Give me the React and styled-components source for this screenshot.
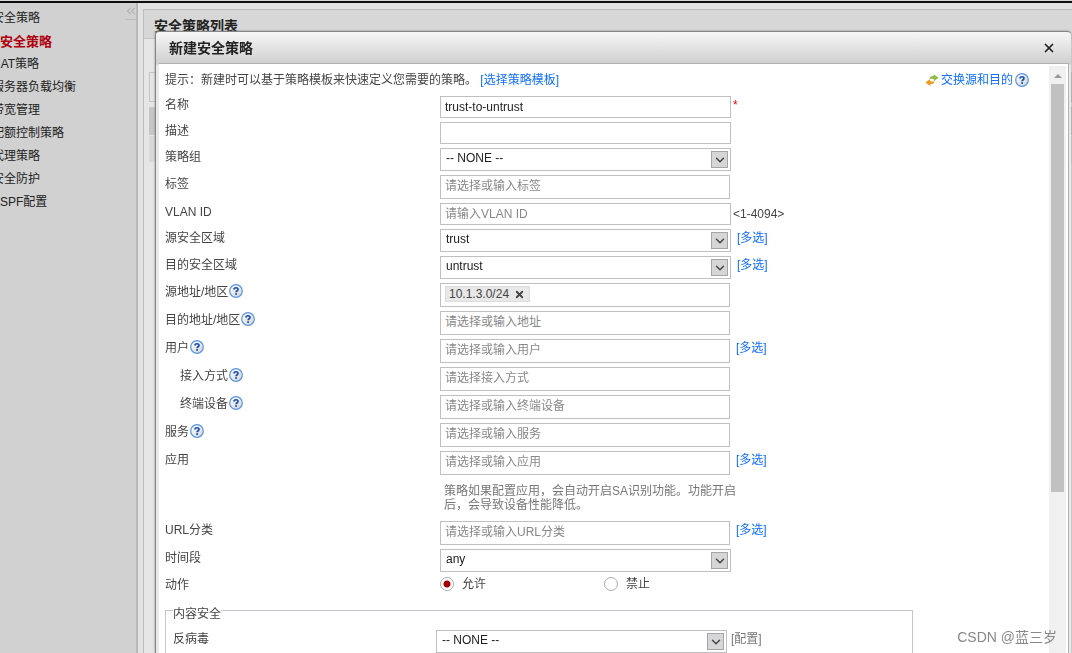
import React from 'react'
import styled, { createGlobalStyle } from 'styled-components'
import { ChevronDown, ChevronsLeft, X } from 'lucide-react'

const menu = ['安全策略', '安全策略', 'NAT策略', '服务器负载均衡', '带宽管理', '配额控制策略', '代理策略', '安全防护', 'ASPF配置']

const HelpIcon = () => (
  <Help type="button" aria-label="帮助">
    <svg width="14" height="14" viewBox="0 0 14 14">
      <defs>
        <linearGradient id="helpFill" x1="0" y1="0" x2="1" y2="1">
          <stop offset="0" stopColor="#ffffff" />
          <stop offset="1" stopColor="#cfd3d8" />
        </linearGradient>
      </defs>
      <circle cx="7" cy="7" r="6.3" fill="url(#helpFill)" stroke="#5b94e0" strokeWidth="1.2" />
      <path d="M5 5.4C5 3.2 9 3.2 9 5.4C9 6.8 7.1 6.7 7.1 8.2" fill="none" stroke="#1b4fa8" strokeWidth="1.7" />
      <rect x="6.2" y="9.2" width="1.8" height="1.7" fill="#1b4fa8" />
    </svg>
  </Help>
)

const SwapIcon = () => (
  <svg width="14" height="12" viewBox="0 0 14 12" aria-hidden="true">
    <path d="M4.6 5.2C4.8 2.4 6.6 2 8.6 2.1V0.2L13.6 3.7L8.8 7.2V5.2C7.2 4.6 6 4.4 4.6 5.2Z" fill="#8fbf45" />
    <path d="M9.4 7.2C9.2 9.8 7.4 10.2 5.4 10V11.9L0.4 8.4L5.2 4.9V6.9C6.8 7.4 8 7.8 9.4 7.2Z" fill="#f09a1c" />
  </svg>
)

const SelectBox = ({ id, value }) => (
  <SelectWrap>
    <Select id={id} defaultValue={value}>
      <option value={value}>{value}</option>
    </Select>
    <Arrow aria-hidden="true">
      <ChevronDown size={14} strokeWidth={2.5} />
    </Arrow>
  </SelectWrap>
)

const Field = ({ id, label, help, indent, multi, children }) => (
  <Row>
    <LabelCell $indent={indent}>
      <label htmlFor={id}>{label}</label>
      {help && <HelpIcon />}
    </LabelCell>
    {children}
    {multi && <Multi href="#">[多选]</Multi>}
  </Row>
)

const App = () => {
  return (
    <Page>
      <GlobalStyle />
      <Sidebar>
        <Menu>
          {menu.map((item, i) => (
            <li key={i}>
              <MenuLink href="#" $active={i === 1}>{item}</MenuLink>
            </li>
          ))}
        </Menu>
        <Collapse type="button" aria-label="收起"><ChevronsLeft size={14} strokeWidth={1.5} /></Collapse>
      </Sidebar>
      <Main>
        <Panel>
          <PanelTitle>安全策略列表</PanelTitle>
          <PanelBody>
            <Toolbar />
            <TableHead />
            <TableRow />
          </PanelBody>
        </Panel>
      </Main>

      <Dialog role="dialog" aria-labelledby="dialog-title">
        <DialogHead>
          <h2 id="dialog-title">新建安全策略</h2>
          <Close type="button" aria-label="关闭"><X size={14} strokeWidth={3} /></Close>
        </DialogHead>
        <DialogBody>
          <Form>
            <Tip>
              <p>提示：新建时可以基于策略模板来快速定义您需要的策略。 <a href="#">[选择策略模板]</a></p>
              <Swap>
                <SwapIcon />
                <a href="#">交换源和目的</a>
                <HelpIcon />
              </Swap>
            </Tip>
            <Field id="name" label="名称">
              <Input id="name" defaultValue="trust-to-untrust" />
              <Required>*</Required>
            </Field>
            <Field id="desc" label="描述"><Input id="desc" /></Field>
            <Field id="group" label="策略组"><SelectBox id="group" value="-- NONE --" /></Field>
            <Field id="tag" label="标签"><PickInput id="tag" placeholder="请选择或输入标签" /></Field>
            <Field id="vlan" label="VLAN ID">
              <Input id="vlan" placeholder="请输入VLAN ID" />
              <Range>&lt;1-4094&gt;</Range>
            </Field>
            <Field id="src-zone" label="源安全区域" multi><SelectBox id="src-zone" value="trust" /></Field>
            <Field id="dst-zone" label="目的安全区域" multi><SelectBox id="dst-zone" value="untrust" /></Field>
            <Field id="src" label="源地址/地区" help>
              <TokenBox>
                <Token>
                  10.1.3.0/24
                  <button type="button" aria-label="删除"><X size={11} strokeWidth={4} /></button>
                </Token>
                <input id="src" />
              </TokenBox>
            </Field>
            <Field id="dst" label="目的地址/地区" help><PickInput id="dst" placeholder="请选择或输入地址" /></Field>
            <Field id="user" label="用户" help multi><PickInput id="user" placeholder="请选择或输入用户" /></Field>
            <Field id="access" label="接入方式" help indent><PickInput id="access" placeholder="请选择接入方式" /></Field>
            <Field id="device" label="终端设备" help indent><PickInput id="device" placeholder="请选择或输入终端设备" /></Field>
            <Field id="service" label="服务" help><PickInput id="service" placeholder="请选择或输入服务" /></Field>
            <Field id="app" label="应用" multi><PickInput id="app" placeholder="请选择或输入应用" /></Field>
            <Note>策略如果配置应用，会自动开启SA识别功能。功能开启后，会导致设备性能降低。</Note>
            <Field id="url" label="URL分类" multi><PickInput id="url" placeholder="请选择或输入URL分类" /></Field>
            <Field id="time" label="时间段"><SelectBox id="time" value="any" /></Field>
            <Row>
              <LabelCell>动作</LabelCell>
              <Choice><input type="radio" name="action" defaultChecked />允许</Choice>
              <Choice><input type="radio" name="action" />禁止</Choice>
            </Row>
            <Group>
              <legend>内容安全</legend>
              <Row>
                <LabelCell $nested><label htmlFor="av">反病毒</label></LabelCell>
                <SelectBox id="av" value="-- NONE --" />
                <Config href="#">[配置]</Config>
              </Row>
            </Group>
          </Form>
          <Scrollbar aria-hidden="true">
            <ScrollUp />
            <Thumb />
          </Scrollbar>
        </DialogBody>
      </Dialog>
      <Watermark>CSDN @蓝三岁</Watermark>
    </Page>
  )
}

const GlobalStyle = createGlobalStyle`
  *{
    box-sizing: border-box;
  }
  body{
    margin: 0;
    overflow: hidden;
    background: #e2e2e2;
    color: #444;
    font: 12px/16px "Liberation Sans", "Noto Sans CJK SC", sans-serif;
  }
  h1, h2, p, ul{
    margin: 0;
    padding: 0;
  }
  input, select, button{
    font: inherit;
    color: inherit;
    margin: 0;
  }
  button{
    display: inline-flex;
    padding: 0;
    border: 0;
    background: none;
  }
  a{
    color: #0f6fff;
    text-decoration: none;
  }
`;
const Page = styled.div`
  display: flex;
  min-height: 100vh;
  padding-top: 3px;
  background: linear-gradient(#d8d8d8 1px, #0c0f0c 1px, #0c0f0c 3px, #e2e2e2 3px);
`;
const Sidebar = styled.nav`
  display: flex;
  justify-content: space-between;
  width: 138px;
  overflow: hidden;
  background: #d1d1d1;
  border-right: 2px solid #b9b9b9;
`;
const Menu = styled.ul`
  list-style: none;
  padding-top: 4px;
  white-space: nowrap;
  li{
    height: 23px;
    line-height: 23px;
  }
`;
const MenuLink = styled.a`
  margin-left: ${(props) => (props.$active ? '0' : '-8px')};
  color: ${(props) => (props.$active ? '#b0000f' : '#222')};
  font-size: ${(props) => (props.$active ? '13px' : '12px')};
  font-weight: ${(props) => (props.$active ? 'bold' : 'normal')};
`;
const Collapse = styled.button`
  align-items: center;
  justify-content: center;
  width: 11px;
  height: 17px;
  color: #999;
  border-bottom: 1px solid #bbb;
  svg{
    flex: none;
  }
`;
const Main = styled.main`
  flex: 1;
  padding: 6px 0 0 5px;
`;
const Panel = styled.section`
  height: 100%;
  border: 1px solid #bdbdbd;
  border-width: 1px 0 0 1px;
  background: #e6e6e6;
`;
const PanelTitle = styled.h1`
  height: 29px;
  padding: 8px 10px 0;
  border-bottom: 1px solid #c4c4c4;
  background: #d7d7d7;
  color: #222;
  font-size: 14px;
  line-height: 16px;
`;
const PanelBody = styled.div`
  padding: 33px 0 0 5px;
`;
const Toolbar = styled.div`
  height: 30px;
  border: 1px solid #c4c4c4;
`;
const TableHead = styled.div`
  height: 28px;
  margin-top: 5px;
  background: #c6c6c6;
`;
const TableRow = styled.div`
  height: 26px;
  margin-top: 1px;
  background: #d8d8d8;
`;
const Dialog = styled.div`
  position: fixed;
  top: 31px;
  right: 1px;
  bottom: 0;
  left: 155px;
  display: flex;
  flex-direction: column;
  padding: 0 2px 0 3px;
  overflow: hidden;
  border: 1px solid #858585;
  border-width: 1px 0 0 1px;
  border-radius: 4px 4px 0 0;
  background: linear-gradient(#f7f7f7, #cfcfcf 32px, #e9e9e9 33px);
  box-shadow: 0 0 2px #777;
`;
const DialogHead = styled.header`
  display: flex;
  flex: none;
  justify-content: space-between;
  align-items: center;
  height: 31px;
  padding: 0 13px 0 10px;
  color: #222;
  h2{
    font-size: 14px;
    line-height: 16px;
  }
`;
const Close = styled.button`
  color: #222;
`;
const DialogBody = styled.div`
  display: flex;
  flex: 1;
  min-height: 0;
  padding-right: 2px;
  border: 1px solid #b0b0b0;
  border-width: 1px 1px 0 0;
  background: #fff;
`;
const Form = styled.form`
  flex: 1;
  min-width: 0;
  padding: 7px 0 0 6px;
  overflow: hidden;
  line-height: 18px;
`;
const Tip = styled.div`
  display: flex;
  justify-content: space-between;
  padding-right: 20px;
  margin-bottom: 7px;
`;
const Swap = styled.div`
  display: flex;
  align-items: center;
  a{
    margin: 0 1px 0 2px;
  }
`;
const Help = styled.button`
  flex: none;
  margin-left: 1px;
`;
const Row = styled.div`
  display: flex;
  align-items: flex-start;
  padding-bottom: 4px;
`;
const LabelCell = styled.div`
  display: flex;
  align-items: center;
  flex: none;
  width: ${(props) => (props.$nested ? '263px' : '275px')};
  padding-left: ${(props) => (props.$indent ? '15px' : '0')};
  ${Help}{
    align-self: flex-start;
    margin-top: 1px;
  }
`;
const Input = styled.input`
  width: 291px;
  height: 22px;
  padding: 0 4px;
  border: 1px solid #bfbfc4;
  background: #fff;
  color: #222;
  &::placeholder{
    color: #888;
    opacity: 1;
  }
`;
const PickInput = styled(Input)`
  width: 290px;
  height: 24px;
  padding-bottom: 3px;
`;
const SelectWrap = styled.div`
  position: relative;
  width: 291px;
`;
const Select = styled.select`
  display: block;
  width: 100%;
  height: 23px;
  padding: 0 24px 3px 5px;
  border: 1px solid #bfbfc4;
  border-radius: 0;
  background: #fff;
  color: #222;
  appearance: none;
`;
const Arrow = styled.span`
  position: absolute;
  top: 3px;
  right: 3px;
  display: flex;
  align-items: center;
  justify-content: center;
  width: 17px;
  height: 17px;
  border: 1px solid #a5a5a8;
  background: #d6d6d8;
  pointer-events: none;
`;
const TokenBox = styled.div`
  display: flex;
  width: 290px;
  height: 24px;
  padding: 2px 4px;
  border: 1px solid #bfbfc4;
  input{
    flex: 1;
    min-width: 0;
    border: 0;
    outline: 0;
  }
`;
const Token = styled.span`
  display: flex;
  align-items: center;
  gap: 5px;
  height: 16px;
  padding: 0 4px 0 3px;
  border: 1px solid #ddd;
  background: #e8e8e8;
  line-height: 14px;
`;
const Multi = styled.a`
  margin-left: 6px;
`;
const Config = styled.a`
  margin-left: 4px;
  color: #777;
`;
const Required = styled.span`
  margin-left: 2px;
  color: #f00;
`;
const Range = styled.span`
  margin-left: 2px;
  line-height: 22px;
`;
const Note = styled.p`
  width: 300px;
  margin: 5px 0 9px 279px;
  color: #777;
  line-height: 14px;
`;
const Choice = styled.label`
  display: flex;
  align-items: center;
  gap: 8px;
  width: 164px;
  line-height: 16px;
  input{
    appearance: none;
    width: 14px;
    height: 14px;
    border: 1px solid #aaa;
    border-radius: 50%;
    background: #fff;
  }
  input:checked{
    background: radial-gradient(#a00000 3px, #fff 4px);
  }
`;
const Group = styled.fieldset`
  min-width: 0;
  margin: 8px 136px 0 0;
  padding: 16px 0 40px 7px;
  border: 1px solid #c3c3d6;
  legend{
    height: 8px;
    padding: 0;
    line-height: 16px;
  }
`;
const Scrollbar = styled.div`
  width: 17px;
  margin-top: 2px;
  background: #f0f0f0;
`;
const ScrollUp = styled.div`
  width: 0;
  margin: 8px auto 6px;
  border: 4px solid transparent;
  border-top: 0;
  border-bottom-color: #999;
`;
const Thumb = styled.div`
  height: 408px;
  margin: 0 2px;
  background: #c1c1c1;
`;
const Watermark = styled.div`
  position: fixed;
  right: 15px;
  bottom: 8px;
  color: #888;
  font-size: 14px;
`;
export default App
